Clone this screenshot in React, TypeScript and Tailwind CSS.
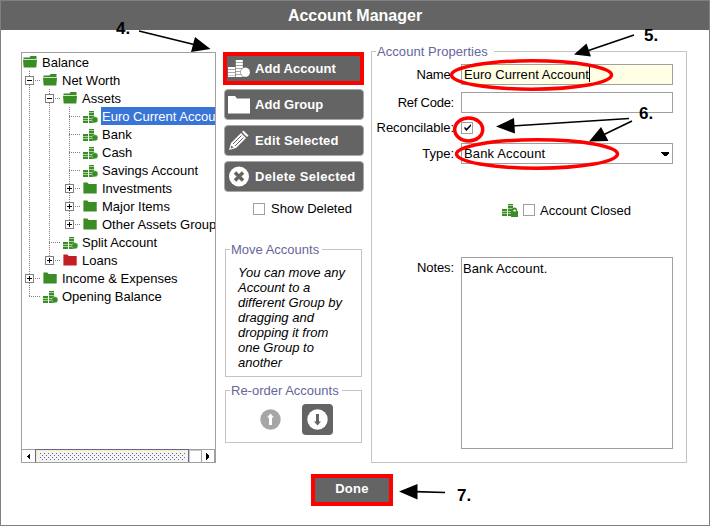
import React from "react";

type Glyph = "open" | "folder" | "red" | "coins";
type Guide = "line" | "tee" | "end" | "none";
type Expander = "plus" | "minus" | undefined;

interface TreeItem {
  label: string;
  glyph: Glyph;
  guides: Guide[];
  expander?: Expander;
  selected?: boolean;
}

const items: TreeItem[] = [
  { label: "Balance", glyph: "open", guides: [] },
  { label: "Net Worth", glyph: "open", guides: ["tee"], expander: "minus" },
  { label: "Assets", glyph: "open", guides: ["line", "tee"], expander: "minus" },
  { label: "Euro Current Account", glyph: "coins", guides: ["line", "line", "tee"], selected: true },
  { label: "Bank", glyph: "coins", guides: ["line", "line", "tee"] },
  { label: "Cash", glyph: "coins", guides: ["line", "line", "tee"] },
  { label: "Savings Account", glyph: "coins", guides: ["line", "line", "tee"] },
  { label: "Investments", glyph: "folder", guides: ["line", "line", "tee"], expander: "plus" },
  { label: "Major Items", glyph: "folder", guides: ["line", "line", "tee"], expander: "plus" },
  { label: "Other Assets Group", glyph: "folder", guides: ["line", "line", "end"], expander: "plus" },
  { label: "Split Account", glyph: "coins", guides: ["line", "tee"] },
  { label: "Loans", glyph: "red", guides: ["line", "end"], expander: "plus" },
  { label: "Income & Expenses", glyph: "folder", guides: ["tee"], expander: "plus" },
  { label: "Opening Balance", glyph: "coins", guides: ["end"] },
];

function GuideCell({ kind, expander }: { kind: Guide; expander?: Expander }) {
  return (
    <svg width="20" height="18" className="shrink-0" shapeRendering="crispEdges">
      {kind !== "none" && (
        <line x1="7.5" x2="7.5" y1="0" y2={kind === "end" ? 10 : 18} stroke="#808080" strokeDasharray="1 1" />
      )}
      {(kind === "tee" || kind === "end") && (
        <line x1="7" x2="19" y1="9.5" y2="9.5" stroke="#808080" strokeDasharray="1 1" />
      )}
      {expander && (
        <>
          <rect x="3.5" y="5.5" width="8" height="8" fill="#fff" stroke="#808080" />
          <path d={expander === "plus" ? "M5 9.5H10M7.5 7V12" : "M5 9.5H10"} stroke="#000" />
        </>
      )}
    </svg>
  );
}

function Coins({ color, gap, className }: { color: string; gap: string; className: string }) {
  return (
    <svg viewBox="0 0 22 17" className={className}>
      <path d="M0 7h7.500v9.800H0zM7.800 0h7v16.800h-7z" fill={gap} />
      <g fill={color}>
        <path d="M0 7h7v2.200H0zM0 10h7v2.200H0zM0 13h7v2.200H0zM0 15.800h7v1.200H0z" />
        <path d="M7.800 0h7v2.200h-7zM7.800 3h7v2.200h-7zM7.800 6h7v2.200h-7zM7.800 9h7v2.200h-7zM7.800 12h7v2.200h-7zM7.800 15h7v2h-7z" />
      </g>
      <circle cx="17.300" cy="12.300" r="5.200" fill={gap} />
      <circle cx="17.300" cy="12.300" r="4.500" fill={color} />
    </svg>
  );
}

function SmallCoins({ lock, className = "" }: { lock?: boolean; className?: string }) {
  return (
    <svg width="16" height="14" className={`shrink-0 ${className}`}>
      <g shapeRendering="crispEdges">
        <path d="M0 6h5v7H0zM6 1h5v12H6z" fill="#a5cf9a" />
        <path
          d="M0 6h5v2H0zM0 9h5v1H0zM0 11h5v2H0zM6 1h5v1H6zM6 3h5v2H6zM6 6h5v2H6zM6 9h5v1H6zM6 11h5v2H6z"
          fill="#3a8c25"
        />
      </g>
      {lock ? (
        <>
          <path d="M9 8h1V7a2.500 2.500 0 0 1 5 0v1h1v6H9z" fill="#3a8c25" />
          <path d="M11.500 8.500V7.300a1.200 1.200 0 0 1 2.300 0v1.200z" fill="#fff" />
        </>
      ) : (
        <circle cx="11.800" cy="9.800" r="3" fill="#3a8c25" stroke="#a5cf9a" strokeWidth="0.500" />
      )}
    </svg>
  );
}

function TreeGlyph({ glyph }: { glyph: Glyph }) {
  if (glyph === "coins") return <SmallCoins className="mt-px" />;
  if (glyph === "open")
    return (
      <svg width="15" height="12" className="shrink-0">
        <path d="M.5 1.500h6L7.500 0H13.500V3H.5z" fill="#3a8c25" />
        <path d="M0 3.700h14L13.300 11.500H.7z" fill="#3a8c25" />
      </svg>
    );
  return (
    <svg width="15" height="12" className="shrink-0">
      <path d="M.4 .5h4l1.300 1.500h8v9.500H.4z" fill={glyph === "red" ? "#c41e25" : "#3a8c25"} />
    </svg>
  );
}

function TreeRow({ item }: { item: TreeItem }) {
  return (
    <div className="flex h-[18px] items-center whitespace-nowrap">
      {item.guides.map((g, i) => (
        <GuideCell key={i} kind={g} expander={i === item.guides.length - 1 ? item.expander : undefined} />
      ))}
      <span className="flex w-[18px] shrink-0 items-center pl-px">
        <TreeGlyph glyph={item.glyph} />
      </span>
      <span
        className={`flex h-[18px] items-center ${item.selected ? "ml-px bg-[#3875d7] pl-px pr-2 text-white" : "pl-0.5"}`}
      >
        {item.label}
      </span>
    </div>
  );
}

function ScrollBar() {
  return (
    <div className="flex h-[13px] shrink-0 border-t border-[#a0a0a0]">
      <div className="flex w-[13px] items-center justify-center">
        <svg width="4" height="7" shapeRendering="crispEdges"><path d="M3 0v7L0 4V3z" /></svg>
      </div>
      <svg width="154" height="13" shapeRendering="crispEdges" className="-mt-px shrink-0">
        <defs>
          <pattern id="grip" width="4" height="4" patternUnits="userSpaceOnUse" x="5" y="4">
            <rect width="1" height="1" fill="#666699" />
            <rect x="2" y="2" width="1" height="1" fill="#666699" />
          </pattern>
        </defs>
        <rect width="154" height="13" fill="#666699" />
        <rect x="1" y="1" width="152" height="12" fill="#ffe9b5" />
        <rect x="2" y="2" width="151" height="11" fill="#f3f3f1" />
        <rect x="5" y="4" width="146" height="7" fill="url(#grip)" />
      </svg>
      <div className="w-3 border-t border-l border-[#c8c8c8]" />
      <div className="flex w-[14px] items-center justify-center border-x border-[#a0a0a0]">
        <svg width="4" height="7" shapeRendering="crispEdges"><path d="M0 0v7l3-3V3z" /></svg>
      </div>
    </div>
  );
}

function ActionButton({ label, icon, marked, spacing }: { label: string; icon: React.ReactNode; marked?: boolean; spacing: string }) {
  return (
    <button
      className={`flex items-center bg-[#646464] text-left font-bold whitespace-nowrap text-white ${spacing} ${
        marked ? "-ml-px mb-1 h-[33px] w-[141px] border-4 border-[#ff0000] pl-px" : "mb-[5px] h-[31px] w-[140px] rounded-[4px] border border-[#a8a8a8] pl-[3px]"
      }`}
    >
      <span className="flex w-[27px] shrink-0">{icon}</span>
      {label}
    </button>
  );
}

function Check({ checked }: { checked?: boolean }) {
  return (
    <span className="flex size-3 shrink-0 items-center justify-center border border-[#a0a0a0] bg-white">
      {checked && (
        <svg width="9" height="9" className="shrink-0">
          <path d="M1.500 3.500v2.500L3.500 8 8 3V1L3.500 5.500z" />
        </svg>
      )}
    </span>
  );
}

function Group({ title, className, gap, children }: { title: string; className: string; gap: string; children: React.ReactNode }) {
  return (
    <section className={`border border-[#c4c4c4] ${className}`}>
      <h2 className={`-mt-2 ml-1 h-4 w-max bg-white pl-px leading-4 text-[#666699] ${gap}`}>{title}</h2>
      {children}
    </section>
  );
}

function Field({ label, className, spacing = "", children }: { label: string; className: string; spacing?: string; children: React.ReactNode }) {
  return (
    <div className={`flex ${className}`}>
      <span className={`mr-[7px] w-[82px] shrink-0 text-right leading-[21px] ${spacing}`}>{label}</span>
      {children}
    </div>
  );
}

function Annotations() {
  return (
    <div className="pointer-events-none absolute -inset-px text-[17px] leading-5 font-bold">
      <svg width="710" height="526" className="absolute inset-0">
        <g fill="none" stroke="#f00" strokeWidth="3.500">
          <ellipse cx="531.500" cy="75" rx="80" ry="14.200" />
          <ellipse cx="468.700" cy="129.500" rx="14" ry="11.500" />
          <ellipse cx="537" cy="154" rx="80.500" ry="14.200" />
        </g>
        <path
          d="M139 31L194 44.500M634 35L587 51M629 118.500L512 126M632 121L603 135M445 492.500L415 491.700"
          stroke="#000"
          strokeWidth="1.700"
        />
        <path d="M210.500 49L195 37L191 52zM574 54.500L586.500 43.500L591 56.500zM496 126.500L514 118L515 133.500zM589 141.500L601 127L608.500 141zM399 491.500L417.500 484V499.500z" />
      </svg>
      <span className="absolute top-[19px] left-[116px]">4.</span>
      <span className="absolute top-[26px] left-[644px]">5.</span>
      <span className="absolute top-[104px] left-[639px]">6.</span>
      <span className="absolute top-[486px] left-[457px]">7.</span>
    </div>
  );
}

export default function App() {
  return (
    <div className="relative flex h-[526px] w-[710px] flex-col overflow-hidden border border-[#808080] bg-white font-['Liberation_Sans',Arial,sans-serif] text-[13px] leading-[15px] text-black">
      <header className="flex h-[29px] shrink-0 items-center justify-center bg-[#646464] text-[16px] font-bold text-white">
        Account Manager
      </header>
      <main className="flex h-[434px] items-start pl-5">
        <div className="mt-[22px] flex h-[411px] w-[195px] shrink-0 flex-col border border-[#a0a0a0]">
          <div className="flex-1 overflow-hidden">
            {items.map((item) => (
              <TreeRow key={item.label} item={item} />
            ))}
          </div>
          <ScrollBar />
        </div>
        <div className="mt-[22px] ml-2 w-[140px] shrink-0">
          <ActionButton marked label="Add Account" spacing="tracking-[0.05px]" icon={<Coins color="#fff" gap="#8c8c8c" className="h-[17px] w-[22px]" />} />
          <ActionButton
            label="Add Group"
            spacing="tracking-[0.05px]"
            icon={<svg width="22" height="19"><path d="M0 1h7l2 2.500h13V18.500H0z" fill="#fff" /></svg>}
          />
          <ActionButton
            label="Edit Selected"
            spacing="tracking-[0.15px]"
            icon={
              <svg width="21" height="21">
                <path d="M1 20l2-7L13 3l5 5L8 18zM14 2l1.500-1.500 5 5L19 7z" fill="#fff" />
                <path d="M5 14l8.500-8.500M7 16l8.500-8.500" stroke="#646464" />
                <path d="M2.500 18.500l1-3 2 2z" fill="#646464" />
              </svg>
            }
          />
          <ActionButton
            label="Delete Selected"
            spacing="tracking-[0.3px]"
            icon={
              <svg width="22" height="21">
                <circle cx="11" cy="10.500" r="10" fill="#fff" />
                <path d="M7 6.500l8 8M15 6.500l-8 8" stroke="#646464" strokeWidth="3.500" />
              </svg>
            }
          />
          <label className="mt-[9px] ml-[29px] flex h-[15px] items-center gap-1.5">
            <Check />
            Show Deleted
          </label>
          <Group title="Move Accounts" className="mt-[33px] ml-px h-32 w-[137px]" gap="pr-[3px]">
            <p className="mt-[7px] ml-3 whitespace-nowrap italic">
              You can move any<br />Account to a<br />different Group by<br />dragging and<br />dropping it from<br />one Group to<br />another
            </p>
          </Group>
          <Group title="Re-order Accounts" className="mt-[13px] ml-px h-[53px] w-[137px]" gap="pr-[3px]">
            <div className="mt-[5px] ml-[34px] flex items-center gap-[21px]">
              <svg width="21" height="21">
                <circle cx="10.500" cy="10.500" r="10.200" fill="#a6a6a6" />
                <path d="M10.500 4.500l3.500 4h-2V16H9V8.500H7z" fill="#fff" />
              </svg>
              <span className="flex size-[31px] items-center justify-center rounded-[4px] bg-[#646464]">
                <svg width="21" height="21">
                  <circle cx="10.500" cy="10.500" r="10.200" fill="#fff" />
                  <path d="M10.500 16.500L7 12.500h2V5h3v7.500h2z" fill="#646464" />
                </svg>
              </span>
            </div>
          </Group>
        </div>
        <Group title="Account Properties" className="mt-[21px] ml-[7px] h-[412px] w-[316px] shrink-0" gap="pr-[6px] tracking-[0.06px]">
          <Field label="Name:" className="mt-1" spacing="tracking-[-0.15px]">
            <div className="flex h-[21px] w-[212px] items-center border border-[#a0a0a0] bg-[#ffffe6] pl-0.5 tracking-[0.03px]">
              Euro Current Account
              <span className="h-[15px] w-px bg-black" />
            </div>
          </Field>
          <Field label="Ref Code:" className="mt-[7px]" spacing="tracking-[-0.25px]">
            <div className="h-[21px] w-[212px] border border-[#a0a0a0]" />
          </Field>
          <Field label="Reconcilable:" className="mt-1 h-[21px] items-center" spacing="tracking-[-0.05px]">
            <Check checked />
          </Field>
          <Field label="Type:" className="mt-[5px]">
            <div className="flex h-[21px] w-[212px] items-center justify-between border border-[#a0a0a0] pr-[3px] pl-0.5 tracking-[0.15px]">
              Bank Account
              <svg width="8" height="4" shapeRendering="crispEdges"><path d="M0 0h8v1L5 4H3L0 1z" /></svg>
            </div>
          </Field>
          <div className="mt-[38px] ml-[130px] flex h-4 items-center">
            <SmallCoins lock className="mr-[5px]" />
            <Check />
            <span className="ml-[5px]">Account Closed</span>
          </div>
          <Field label="Notes:" className="mt-[39px]" spacing="tracking-[-0.1px]">
            <div className="h-48 w-[212px] border border-[#a0a0a0] pt-[3px] pl-px tracking-[0.1px]">Bank Account.</div>
          </Field>
        </Group>
      </main>
      <button className="mt-[10px] ml-[310px] h-8 w-[82px] shrink-0 border-4 border-[#ff0000] bg-[#646464] pb-1 text-center font-bold tracking-[0.3px] text-white">
        Done
      </button>
      <Annotations />
    </div>
  );
}
